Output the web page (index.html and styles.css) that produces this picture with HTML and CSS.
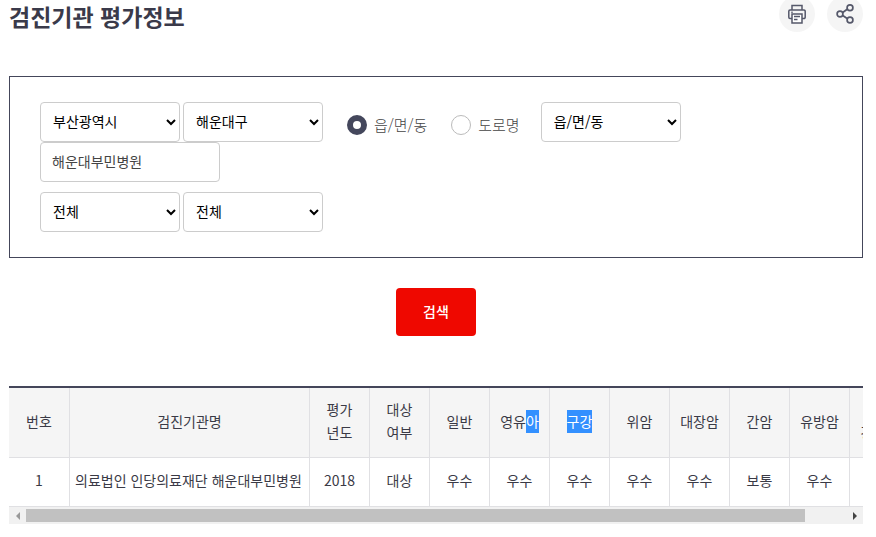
FILE: index.html
```html
<!DOCTYPE html>
<html lang="ko">
  <head>
    <meta charset="UTF-8" />
    <meta name="viewport" content="width=device-width, initial-scale=1.0" />
    <title>검진기관 평가정보</title>
    <link rel="stylesheet" href="styles.css">
  </head>
  <body>
    <div class="container">
      <div class="header">
        <h1>검진기관 평가정보</h1>
        <div class="tools">
          <button type="button" class="tool-button" aria-label="인쇄">
            <svg width="18" height="20" viewBox="0 0 18 20" fill="none" stroke="#55586a" stroke-width="1.5">
              <path d="M4 6V1.5h10V6" />
              <path d="M4 14.5H2A1.2 1.2 0 0 1 .8 13.3V7.2A1.2 1.2 0 0 1 2 6h14a1.2 1.2 0 0 1 1.2 1.2v6.1a1.2 1.2 0 0 1-1.2 1.2h-2" />
              <path d="M4 10h10v9H4z" fill="#fff" />
              <path d="M6 12.5h6M6 15.5h3.5" />
              <path d="M3 8.2h2" stroke-width="1" />
            </svg>
          </button>
          <button type="button" class="tool-button" aria-label="공유">
            <svg width="18" height="20" viewBox="0 0 18 20" fill="none" stroke="#55586a" stroke-width="1.7">
              <path d="M6.4 8.7 11.5 5M6.4 11.3l5.1 3.5" />
              <circle cx="4" cy="10" r="2.9" />
              <circle cx="14" cy="3.8" r="2.9" />
              <circle cx="14" cy="16" r="2.9" />
            </svg>
          </button>
        </div>
      </div>

      <form id="search-form">
        <div class="search-box">
          <div class="search-row">
            <select name="sido" aria-label="시/도">
              <option>부산광역시</option>
            </select>
            <select name="sigungu" aria-label="시/군/구">
              <option>해운대구</option>
            </select>
            <div class="radio-group">
              <label><input type="radio" name="addr-type" checked />읍/면/동</label>
              <label><input type="radio" name="addr-type" />도로명</label>
            </div>
            <select name="dong" aria-label="읍/면/동">
              <option>읍/면/동</option>
            </select>
            <input type="text" name="hospital" aria-label="검진기관명" value="해운대부민병원" />
          </div>
          <div class="search-row">
            <select name="year" aria-label="평가년도">
              <option>전체</option>
            </select>
            <select name="grade" aria-label="평가등급">
              <option>전체</option>
            </select>
          </div>
        </div>
        <div class="button-area">
          <button type="submit" class="search-button">검색</button>
        </div>
      </form>

      <div class="table-wrap">
        <table>
          <colgroup>
            <col class="col-num" />
            <col class="col-name" />
            <col span="10" />
          </colgroup>
          <thead>
            <tr>
              <th>번호</th>
              <th>검진기관명</th>
              <th>평가<br />년도</th>
              <th>대상<br />여부</th>
              <th>일반</th>
              <th>영유<mark>아</mark></th>
              <th><mark>구강</mark></th>
              <th>위암</th>
              <th>대장암</th>
              <th>간암</th>
              <th>유방암</th>
              <th>자궁<br />경부암</th>
            </tr>
          </thead>
          <tbody>
            <tr>
              <td>1</td>
              <td class="name">의료법인 인당의료재단 해운대부민병원</td>
              <td>2018</td>
              <td>대상</td>
              <td>우수</td>
              <td>우수</td>
              <td>우수</td>
              <td>우수</td>
              <td>우수</td>
              <td>보통</td>
              <td>우수</td>
              <td>우수</td>
            </tr>
          </tbody>
        </table>
      </div>
      <div class="scrollbar">
        <button type="button" class="arrow arrow-left" aria-label="왼쪽"></button>
        <div class="track"><div class="thumb"></div></div>
        <button type="button" class="arrow arrow-right" aria-label="오른쪽"></button>
      </div>
    </div>
  </body>
</html>
```
FILE: styles.css
```css
* {
  box-sizing: border-box;
}
body {
  margin: 0;
  background: #fff;
  color: #333;
  font-family: "Noto Sans CJK KR", sans-serif;
  font-size: 14px;
}
button,
select,
input {
  font-family: inherit;
}
.container {
  padding: 0 13px 0 9px;
}
.header {
  display: flex;
  justify-content: space-between;
  align-items: flex-start;
  height: 76px;
}
.header h1 {
  margin: 0;
  font-size: 23px;
  line-height: 32px;
  font-weight: bold;
  color: #3a3a4a;
}
.tools {
  display: flex;
  gap: 12px;
  margin-top: -4px;
}
.tool-button {
  display: flex;
  align-items: center;
  justify-content: center;
  width: 36px;
  height: 36px;
  padding: 0;
  border: none;
  border-radius: 50%;
  background: #f5f5f5;
  cursor: pointer;
}
.search-box {
  display: flex;
  flex-direction: column;
  gap: 10px;
  padding: 25px 30px;
  border: 1px solid #44465a;
}
.search-row {
  display: flex;
  flex-wrap: wrap;
  align-items: flex-start;
  column-gap: 3px;
}
select,
input[type="text"] {
  width: 140px;
  height: 40px;
  padding: 0 8px 2px;
  border: 1px solid #ccc;
  border-radius: 4px;
  background-color: #fff;
  color: #000;
  font-size: 14px;
}
input[type="text"] {
  width: 180px;
  padding: 0 11px 2px;
  color: #444;
}
.radio-group {
  display: flex;
  gap: 24px;
  margin: 0 18px 0 21px;
  padding-top: 13px;
}
.radio-group label {
  display: flex;
  align-items: center;
  gap: 7px;
  font-size: 15px;
  font-weight: 300;
  line-height: 20px;
  color: #444;
}
.radio-group input {
  appearance: none;
  width: 20px;
  height: 20px;
  margin: 0;
  border: 1px solid #bbb;
  border-radius: 50%;
  background: #fff;
}
.radio-group input:checked {
  border: 6px solid #44475c;
}
.button-area {
  margin: 30px 0 50px;
  text-align: center;
}
.search-button {
  display: inline-block;
  width: 80px;
  height: 48px;
  padding: 0 0 2px;
  border: none;
  border-radius: 4px;
  background: #ef0800;
  color: #fff;
  font-size: 14px;
  font-weight: 500;
  vertical-align: top;
  cursor: pointer;
}
.table-wrap {
  overflow: hidden;
  border-top: 2px solid #44465a;
}
table {
  width: 901px;
  table-layout: fixed;
  border-collapse: separate;
  border-spacing: 0;
  line-height: 23px;
  color: #3a3a46;
}
.col-num {
  width: 61px;
}
.col-name {
  width: 240px;
}
th,
td {
  padding: 0 0 3px;
  border-right: 1px solid #e0e0e3;
  border-bottom: 1px solid #e0e0e3;
  font-weight: normal;
  text-align: center;
}
th {
  height: 70px;
  background: #f5f5f5;
}
td {
  height: 49px;
}
td.name {
  padding: 0 5px 3px;
  text-align: left;
  white-space: nowrap;
}
mark {
  display: inline-block;
  background: #3390ff;
  color: #fff;
}
.scrollbar {
  display: flex;
  height: 17px;
  background: #f1f1f1;
}
.arrow {
  display: flex;
  align-items: center;
  justify-content: center;
  width: 17px;
  padding: 0;
  border: none;
  background: none;
}
.arrow::before {
  content: "";
  border: 4px solid transparent;
}
.arrow-left::before {
  border-left-width: 0;
  border-right-color: #999;
}
.arrow-right::before {
  border-right-width: 0;
  border-left-color: #444;
}
.track {
  flex: 1;
  padding: 2px 0;
}
.thumb {
  width: 95%;
  height: 100%;
  background: #c1c1c1;
}
```
